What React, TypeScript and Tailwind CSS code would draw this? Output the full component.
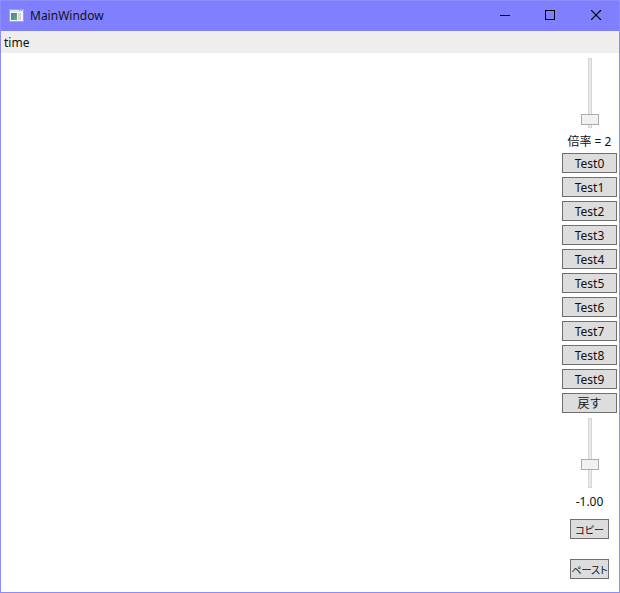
import React, { useState } from 'react';

const TESTS = ['Test0', 'Test1', 'Test2', 'Test3', 'Test4', 'Test5', 'Test6', 'Test7', 'Test8', 'Test9'];

const AppIcon = () => (
  <svg width="16" height="14" viewBox="0 0 16 14" shapeRendering="crispEdges" aria-hidden="true">
    <defs>
      <linearGradient id="pane" x1="0" y1="0" x2="1" y2="1">
        <stop offset="0" stopColor="#4a7fa8" />
        <stop offset="1" stopColor="#5cae84" />
      </linearGradient>
    </defs>
    <rect x="0" y="0" width="15" height="13" fill="#a5a5b4" />
    <rect x="1" y="1" width="13" height="11" fill="#f7f7f7" />
    <rect x="1" y="1" width="13" height="2" fill="#e6e6e6" />
    <rect x="10" y="1" width="1" height="1" fill="#9a9a9a" />
    <rect x="12" y="1" width="1" height="1" fill="#9a9a9a" />
    <rect x="2" y="4" width="6" height="7" fill="url(#pane)" />
    <rect x="9" y="4" width="3" height="7" fill="#d3d8d6" />
  </svg>
);

interface CaptionButtonProps {
  label: string;
  children: React.ReactNode;
}

const CaptionButton = ({ label, children }: CaptionButtonProps) => (
  <button type="button" aria-label={label} className="flex h-7 w-[45px] items-center justify-center hover:bg-white/20">
    {children}
  </button>
);

const TitleBar = () => (
  <header className="flex h-[30px] items-center bg-[#8080ff] pl-2">
    <AppIcon />
    <h1 className="ml-[5px] flex-1 text-[12px] leading-4">MainWindow</h1>
    <div className="flex self-start">
      <CaptionButton label="Minimize">
        <svg width="13" height="10" shapeRendering="crispEdges">
          <path d="M0 5.5H10" stroke="#000" />
        </svg>
      </CaptionButton>
      <CaptionButton label="Maximize">
        <svg width="13" height="10" shapeRendering="crispEdges">
          <path d="M.5 .5H9.5V9.5H.5Z" fill="none" stroke="#000" />
        </svg>
      </CaptionButton>
      <CaptionButton label="Close">
        <svg width="11" height="10">
          <path d="M0 0L10 10M10 0L0 10" stroke="#000" strokeWidth="1.2" />
        </svg>
      </CaptionButton>
    </div>
  </header>
);

interface VerticalSliderProps {
  id: string;
  min: number;
  max: number;
  step: number;
  value: number;
  onChange: (value: number) => void;
}

const VerticalSlider = ({ id, min, max, step, value, onChange }: VerticalSliderProps) => (
  <input
    id={id}
    type="range"
    min={min}
    max={max}
    step={step}
    value={value}
    onChange={(e) => onChange(Number(e.target.value))}
    className="mt-[5px] mb-[5px] block h-[70px] w-1 appearance-none bg-[#e7eaea] shadow-[inset_0_0_0_1px_#d6d6d6] [writing-mode:vertical-lr] [direction:rtl] [&::-webkit-slider-thumb]:h-[11px] [&::-webkit-slider-thumb]:w-[18px] [&::-webkit-slider-thumb]:appearance-none [&::-webkit-slider-thumb]:border [&::-webkit-slider-thumb]:border-[#acacac] [&::-webkit-slider-thumb]:bg-[#f0f0f0]"
  />
);

interface PushButtonProps {
  className: string;
  onClick?: () => void;
  children: React.ReactNode;
}

const PushButton = ({ className, onClick, children }: PushButtonProps) => (
  <button
    type="button"
    onClick={onClick}
    className={`flex h-5 items-center justify-center border border-[#707070] bg-[#dddddd] pt-0.5 whitespace-nowrap hover:bg-[#bee6fd] ${className}`}
  >
    {children}
  </button>
);

export default function App() {
  const [scale, setScale] = useState(2);
  const [offset, setOffset] = useState(-1);

  return (
    <div className="flex min-h-screen flex-col border border-[#8c8cff] bg-white font-['Noto_Sans','Noto_Sans_CJK_JP',sans-serif] text-[12px] leading-4 text-[#111111]">
      <TitleBar />
      <nav className="flex h-[22px] items-center bg-[#f0eded] pt-0.5 pl-[3px]">
        <button type="button">time</button>
      </nav>

      <div className="flex flex-1">
        <main className="flex-1" />
        <aside className="flex w-[59px] flex-col items-center px-0.5">
          <VerticalSlider id="scale" min={1} max={20} step={1} value={scale} onChange={setScale} />
          <label htmlFor="scale" className="leading-[18px] whitespace-nowrap">
            倍率 = {scale}
          </label>

          <div className="mt-0.5 flex flex-col gap-1 self-stretch">
            {TESTS.map((name) => (
              <PushButton key={name} className="w-full">
                {name}
              </PushButton>
            ))}
            <PushButton className="w-full" onClick={() => setOffset(-1)}>
              戻す
            </PushButton>
          </div>

          <VerticalSlider id="offset" min={-4} max={6} step={0.01} value={offset} onChange={setOffset} />
          <label htmlFor="offset" className="leading-[18px]">
            {offset.toFixed(2)}
          </label>

          <div className="mt-2 flex flex-col gap-5">
            <PushButton className="w-[39px] text-[10px] [font-feature-settings:'palt']">コピー</PushButton>
            <PushButton className="w-[39px] text-[10px] [font-feature-settings:'palt']">ペースト</PushButton>
          </div>
        </aside>
      </div>
    </div>
  );
}
